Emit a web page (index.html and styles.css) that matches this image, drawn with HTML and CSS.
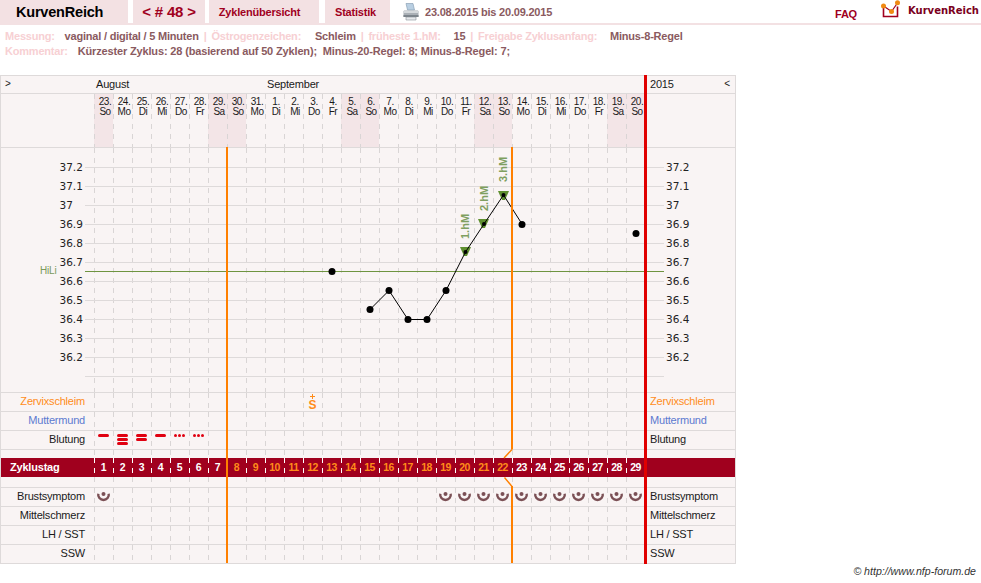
FILE: index.html
```html
<!DOCTYPE html>
<html lang="en">
<head>
    <meta charset="UTF-8">
    <title>KurvenReich</title>
    <link rel="stylesheet" href="styles.css">
</head>
<body>

    <!-- Header -->
    <div class="header">
        <div class="tab tab-logo">KurvenReich</div>
        <div class="tab tab-cycle">&lt; # 48 &gt;</div>
        <div class="tab tab-overview">Zyklenübersicht</div>
        <div class="tab tab-stats">Statistik</div>
        <svg class="printer" width="16" height="18" viewBox="0 0 16 18">
            <path d="M3 0.5h7l1.5 6.5h-7z" fill="#b9cfe2" stroke="#7f97ad" stroke-width="0.6"/>
            <path d="M1 7.5h14l0.5 1v5.5h-15v-5.5z" fill="#aab0b6"/>
            <path d="M1 8h14v2h-14z" fill="#d5d9dc"/>
            <path d="M3 14h10v3h-10z" fill="#e6e9ec" stroke="#8b9299" stroke-width="0.6"/>
            <path d="M0.5 12h15v2h-15z" fill="#7d858c"/>
        </svg>
        <div class="dates">23.08.2015 bis 20.09.2015</div>
        <div class="faq">FAQ</div>
        <svg class="logo-mark" width="20" height="19" viewBox="0 0 20 19">
            <path d="M2.5 7v9.5h14v-10" fill="none" stroke="#a0001e" stroke-width="1.6"/>
            <path d="M2.5 6l8 5.5 6-8.5" fill="none" stroke="#a0001e" stroke-width="1.2"/>
            <circle cx="2.5" cy="6" r="2.5" fill="#f08a12"/>
            <circle cx="10.5" cy="11.5" r="2.5" fill="#f08a12"/>
            <circle cx="16.5" cy="2.8" r="2.5" fill="#f08a12"/>
        </svg>
        <div class="logo-text">KurvenReich</div>
    </div>

    <!-- Cycle info -->
    <div class="info">
        <div>
            <span class="lbl">Messung:</span>
            <span class="val val-mess">vaginal / digital / 5 Minuten</span>
            <span class="lbl sep">|</span>
            <span class="lbl">Östrogenzeichen:</span>
            <span class="val val-oe">Schleim</span>
            <span class="lbl sep">|</span>
            <span class="lbl">früheste 1.hM:</span>
            <span class="val val-hm">15</span>
            <span class="lbl sep">|</span>
            <span class="lbl">Freigabe Zyklusanfang:</span>
            <span class="val val-frei">Minus-8-Regel</span>
        </div>
        <div>
            <span class="lbl">Kommentar:</span>
            <span class="val val-komm">Kürzester Zyklus: 28 (basierend auf 50 Zyklen); &nbsp;Minus-20-Regel: 8; Minus-8-Regel: 7;</span>
        </div>
    </div>

    <!-- Chart table -->
    <div class="chart">
        <div class="row row-months">
            <div class="side toggle">&gt;</div>
            <div class="months">
                <span class="month-aug">August</span>
                <span>September</span>
            </div>
            <div class="side-right year"><span>2015</span><span class="toggle">&lt;</span></div>
        </div>

        <div class="row row-days">
            <div></div>
            <div class="days">
                <div class="day we">23.<br>So</div>
                <div class="day">24.<br>Mo</div>
                <div class="day">25.<br>Di</div>
                <div class="day">26.<br>Mi</div>
                <div class="day">27.<br>Do</div>
                <div class="day">28.<br>Fr</div>
                <div class="day we">29.<br>Sa</div>
                <div class="day we">30.<br>So</div>
                <div class="day">31.<br>Mo</div>
                <div class="day">1.<br>Di</div>
                <div class="day">2.<br>Mi</div>
                <div class="day">3.<br>Do</div>
                <div class="day">4.<br>Fr</div>
                <div class="day we">5.<br>Sa</div>
                <div class="day we">6.<br>So</div>
                <div class="day">7.<br>Mo</div>
                <div class="day">8.<br>Di</div>
                <div class="day">9.<br>Mi</div>
                <div class="day">10.<br>Do</div>
                <div class="day">11.<br>Fr</div>
                <div class="day we">12.<br>Sa</div>
                <div class="day we">13.<br>So</div>
                <div class="day">14.<br>Mo</div>
                <div class="day">15.<br>Di</div>
                <div class="day">16.<br>Mi</div>
                <div class="day">17.<br>Do</div>
                <div class="day">18.<br>Fr</div>
                <div class="day we">19.<br>Sa</div>
                <div class="day we">20.<br>So</div>
            </div>
            <div></div>
        </div>

        <!-- Temperature curve, coordinates are page pixels -->
        <div class="row-plot">
            <svg class="plot" width="734" height="244" viewBox="1 148 734 244">
                <g class="col-lines">
                    <path d="M94 148V392M113 148V392M132 148V392M151 148V392M170 148V392M189 148V392M208 148V392M227 148V392M246 148V392M265 148V392M284 148V392M303 148V392M322 148V392M341 148V392M360 148V392M379 148V392M398 148V392M417 148V392M436 148V392M455 148V392M474 148V392M493 148V392M512 148V392M531 148V392M550 148V392M569 148V392M588 148V392M607 148V392M626 148V392"/>
                </g>
                <path class="temp-lines" d="M85 167.5H664M85 186.5H664M85 205.5H664M85 224.5H664M85 243.5H664M85 262.5H664M85 281.5H664M85 300.5H664M85 319.5H664M85 338.5H664M85 357.5H664M85 376.5H664"/>
                <g class="temps">
                    <text x="59.5" y="171">37.2</text><text x="666" y="171">37.2</text>
                    <text x="59.5" y="190">37.1</text><text x="666" y="190">37.1</text>
                    <text x="59.5" y="209">37</text><text x="666" y="209">37</text>
                    <text x="59.5" y="228">36.9</text><text x="666" y="228">36.9</text>
                    <text x="59.5" y="247">36.8</text><text x="666" y="247">36.8</text>
                    <text x="59.5" y="266">36.7</text><text x="666" y="266">36.7</text>
                    <text x="59.5" y="285">36.6</text><text x="666" y="285">36.6</text>
                    <text x="59.5" y="304">36.5</text><text x="666" y="304">36.5</text>
                    <text x="59.5" y="323">36.4</text><text x="666" y="323">36.4</text>
                    <text x="59.5" y="342">36.3</text><text x="666" y="342">36.3</text>
                    <text x="59.5" y="361">36.2</text><text x="666" y="361">36.2</text>
                </g>
                <text class="hili" x="40" y="274">HiLi</text>
                <path class="hili-line" d="M85 271.5H664"/>
                <polygon class="hm" points="460,247 471,247 467,256 464,256"/>
                <polygon class="hm" points="478,219 489,219 485,228 482,228"/>
                <polygon class="hm" points="498,191 509,191 505,200 502,200"/>
                <text class="hm-text" transform="translate(469 239) rotate(-90)">1.hM</text>
                <text class="hm-text" transform="translate(488 211) rotate(-90)">2.hM</text>
                <text class="hm-text" transform="translate(507 182) rotate(-90)">3.hM</text>
                <polyline class="curve" points="370,309.5 389,290.5 408,319.5 427,319.5 446,290.5 465.5,252 484,224 503.5,195 522,224"/>
                <g class="dots">
                    <circle cx="332" cy="271.5" r="3.5"/>
                    <circle cx="370" cy="309.5" r="3.5"/>
                    <circle cx="389" cy="290.5" r="3.5"/>
                    <circle cx="408" cy="319.5" r="3.5"/>
                    <circle cx="427" cy="319.5" r="3.5"/>
                    <circle cx="446" cy="290.5" r="3.5"/>
                    <circle cx="465.5" cy="252" r="2"/>
                    <circle cx="484" cy="224" r="2"/>
                    <circle cx="503.5" cy="195" r="2"/>
                    <circle cx="522" cy="224.5" r="3.5"/>
                    <circle cx="636" cy="233.5" r="3.5"/>
                </g>
            </svg>
        </div>

        <div class="row">
            <div class="side orange">Zervixschleim</div>
            <div class="cells">
                <div class="mucus at12"><i class="plus"></i><b>S</b></div>
            </div>
            <div class="side-right orange">Zervixschleim</div>
        </div>
        <div class="row">
            <div class="side blue">Muttermund</div>
            <div class="cells"></div>
            <div class="side-right blue">Muttermund</div>
        </div>
        <div class="row">
            <div class="side">Blutung</div>
            <div class="cells">
                <div class="blood"><i class="bar"></i></div>
                <div class="blood"><i class="bar"></i><i class="bar"></i><i class="bar"></i></div>
                <div class="blood"><i class="bar"></i><i class="bar"></i></div>
                <div class="blood"><i class="bar"></i></div>
                <div class="blood spots"><i></i><i></i><i></i></div>
                <div class="blood spots"><i></i><i></i><i></i></div>
            </div>
            <div class="side-right">Blutung</div>
        </div>

        <div class="row row-gap">
            <div></div>
            <div class="cells"></div>
            <div></div>
        </div>

        <div class="row row-band">
            <div class="side band-title">Zyklustag</div>
            <div class="cells band-cells">
                <div class="num">1</div><div class="num">2</div><div class="num">3</div><div class="num">4</div>
                <div class="num">5</div><div class="num">6</div><div class="num">7</div>
                <div class="num fertile">8</div><div class="num fertile">9</div><div class="num fertile">10</div>
                <div class="num fertile">11</div><div class="num fertile">12</div><div class="num fertile">13</div>
                <div class="num fertile">14</div><div class="num fertile">15</div><div class="num fertile">16</div>
                <div class="num fertile">17</div><div class="num fertile">18</div><div class="num fertile">19</div>
                <div class="num fertile">20</div><div class="num fertile">21</div><div class="num fertile">22</div>
                <div class="num">23</div><div class="num">24</div><div class="num">25</div><div class="num">26</div>
                <div class="num">27</div><div class="num">28</div><div class="num">29</div>
            </div>
            <div></div>
        </div>

        <div class="row row-gap row-gap-low">
            <div></div>
            <div class="cells"></div>
            <div></div>
        </div>

        <div class="row">
            <div class="side">Brustsymptom</div>
            <div class="cells">
                <svg class="breast" viewBox="0 0 19 18"><use href="#breast-mark"/></svg>
                <svg class="breast at19" viewBox="0 0 19 18"><use href="#breast-mark"/></svg>
                <svg class="breast" viewBox="0 0 19 18"><use href="#breast-mark"/></svg>
                <svg class="breast" viewBox="0 0 19 18"><use href="#breast-mark"/></svg>
                <svg class="breast" viewBox="0 0 19 18"><use href="#breast-mark"/></svg>
                <svg class="breast" viewBox="0 0 19 18"><use href="#breast-mark"/></svg>
                <svg class="breast" viewBox="0 0 19 18"><use href="#breast-mark"/></svg>
                <svg class="breast" viewBox="0 0 19 18"><use href="#breast-mark"/></svg>
                <svg class="breast" viewBox="0 0 19 18"><use href="#breast-mark"/></svg>
                <svg class="breast" viewBox="0 0 19 18"><use href="#breast-mark"/></svg>
                <svg class="breast" viewBox="0 0 19 18"><use href="#breast-mark"/></svg>
                <svg class="breast" viewBox="0 0 19 18"><use href="#breast-mark"/></svg>
            </div>
            <div class="side-right">Brustsymptom</div>
        </div>
        <div class="row">
            <div class="side">Mittelschmerz</div>
            <div class="cells"></div>
            <div class="side-right">Mittelschmerz</div>
        </div>
        <div class="row">
            <div class="side">LH / SST</div>
            <div class="cells"></div>
            <div class="side-right">LH / SST</div>
        </div>
        <div class="row">
            <div class="side">SSW</div>
            <div class="cells"></div>
            <div class="side-right">SSW</div>
        </div>

        <!-- Cover lines and end of cycle line -->
        <svg class="overlay" width="736" height="489" viewBox="0 75 736 489">
            <path class="cover" d="M227 147V563"/>
            <path class="cover" d="M512 147V449.5"/>
            <path class="cover cover-thin" d="M512 449.5L504 458M504.5 477.5L512 486.5"/>
            <path class="cover" d="M512 486V563"/>
            <rect class="cycle-end" x="644" y="75" width="3" height="489"/>
        </svg>
    </div>

    <div class="footer">© http://www.nfp-forum.de</div>

    <svg class="defs" width="0" height="0">
        <symbol id="breast-mark" viewBox="0 0 19 18">
            <path d="M4.3 5.7A5.3 5.3 0 1 0 14.7 5.7" fill="none" stroke="#7b5055" stroke-width="2.4"/>
            <circle cx="9.5" cy="6" r="2" fill="#7b5055"/>
        </symbol>
    </svg>

</body>
</html>
```

FILE: styles.css
```css
/* General Styles */
body {
    font-family: "Liberation Sans", Arial, sans-serif;
    font-size: 11px;
    letter-spacing: -0.2px;
    margin: 0;
    padding: 0;
    background: #ffffff;
    color: #1a1a1a;
}

/* Header */
.header {
    display: flex;
    align-items: flex-start;
    height: 23px;
    border-bottom: 2px solid #f3e1e3;
}

.tab {
    height: 23px;
    line-height: 24px;
    background: #f3e1e3;
    color: #a0001e;
    font-weight: bold;
    text-align: center;
    box-sizing: border-box;
}

.tab-logo {
    width: 128px;
    padding-left: 16px;
    text-align: left;
    color: #000000;
    font-size: 14.5px;
}

.tab-cycle {
    width: 72px;
    margin-left: 5px;
    font-size: 15px;
}

.tab-overview {
    width: 110px;
    margin-left: 4px;
    padding-right: 9px;
}

.tab-stats {
    width: 65px;
    margin-left: 6px;
    padding-right: 4px;
}

.printer {
    margin: 3px 0 0 13px;
}

.dates {
    margin-left: 6px;
    line-height: 24px;
    font-weight: bold;
    color: #8a5a60;
}

.faq {
    margin-left: auto;
    line-height: 28px;
    font-weight: bold;
    color: #a0001e;
}

.logo-mark {
    margin: 0 0 0 24px;
}

.logo-text {
    margin: 0 2px 0 7px;
    line-height: 22px;
    font-family: "DejaVu Sans", sans-serif;
    font-size: 10px;
    font-weight: bold;
    letter-spacing: 0;
    color: #7a0020;
}

/* Cycle info */
.info {
    padding: 4px 0 16px 5px;
    line-height: 15px;
    font-weight: bold;
}

.lbl {
    color: #f7d0d3;
}

.val {
    color: #8a5a60;
}

.sep {
    margin: 0 2px;
}

.val-mess {
    margin-left: 7px;
}

.val-oe {
    margin-left: 11px;
}

.val-hm {
    margin-left: 10px;
}

.val-frei {
    margin-left: 10px;
}

.val-komm {
    margin-left: 7px;
    letter-spacing: -0.15px;
}

/* Chart table */
.chart {
    position: relative;
    width: 736px;
    box-sizing: border-box;
    border: 1px solid #dedada;
    border-bottom: none;
    background: #f9f4f4;
}

.row {
    display: grid;
    grid-template-columns: 93px 551px 1fr;
    height: 19px;
    box-sizing: border-box;
    border-bottom: 1px solid #dedada;
    line-height: 17px;
}

.side {
    padding-right: 9px;
    text-align: right;
}

.side-right {
    padding-left: 5px;
}

.orange {
    color: #ff8c1a;
}

.blue {
    color: #5c7ad0;
}

.row-months {
    height: 18px;
}

.toggle {
    padding: 0;
    line-height: 15px;
    font-size: 10px;
}

.row-months > .toggle {
    padding-left: 4px;
    text-align: left;
}

.months {
    display: grid;
    grid-template-columns: 171px 1fr;
    padding-left: 2px;
}

.year {
    display: flex;
    justify-content: space-between;
    padding-right: 5px;
}

.row-days {
    height: 54px;
}

.days,
.cells {
    display: grid;
    grid-template-columns: repeat(29, 19px);
    grid-auto-rows: 100%;
}

.day {
    padding: 3px 0 0 3px;
    font-size: 10px;
    letter-spacing: -0.5px;
    line-height: 10px;
    text-align: center;
    background-image: repeating-linear-gradient(to bottom, #d9d5d5 0 5px, transparent 5px 10px);
    background-size: 1px 100%;
    background-repeat: no-repeat;
}

.we {
    background-color: #f3e5e7;
}

/* Dashed day lines: stripes on top of solid lines */
.cells {
    background-image:
        repeating-linear-gradient(to bottom, transparent 0 5px, #f9f4f4 5px 10px),
        linear-gradient(to right, #d9d5d5 1px, transparent 1px);
    background-size: 100% 100%, 19px 100%;
}

.row-plot {
    height: 245px;
    box-sizing: border-box;
    border-bottom: 1px solid #dedada;
}

.plot {
    display: block;
}

.col-lines path {
    stroke: #d9d5d5;
    stroke-dasharray: 5 5;
    fill: none;
    transform: translateX(0.5px);
}

.temp-lines {
    stroke: #dedada;
    fill: none;
}

.temps text {
    font-family: "DejaVu Sans", sans-serif;
    font-size: 10.5px;
    letter-spacing: 0;
    fill: #222222;
}

.hili {
    font-size: 10px;
    fill: #7a9a5a;
}

.hili-line {
    stroke: #6f9440;
    fill: none;
}

.hm {
    fill: #5f8f2f;
}

.hm-text {
    font-size: 11px;
    font-weight: bold;
    letter-spacing: 0;
    fill: #7f9f60;
}

.curve {
    fill: none;
    stroke: #000000;
}

.dots circle {
    fill: #000000;
}

/* Symptom marks */
.mucus {
    display: flex;
    flex-direction: column;
    align-items: center;
    padding-top: 1px;
    color: #ff8c1a;
}

.plus {
    width: 5px;
    height: 5px;
    margin-bottom: 1px;
    background:
        linear-gradient(#ff8c1a, #ff8c1a) center / 100% 1px no-repeat,
        linear-gradient(#ff8c1a, #ff8c1a) center / 1px 100% no-repeat;
}

.mucus b {
    font-size: 12px;
    line-height: 10px;
}

.at12 {
    grid-column: 12;
}

.at19 {
    grid-column: 19;
}

.blood {
    display: flex;
    flex-direction: column;
    align-items: center;
    gap: 1px;
    padding-top: 3px;
}

.bar {
    display: block;
    width: 11px;
    height: 3px;
    border-radius: 2px;
    background: #e00010;
}

.spots {
    flex-direction: row;
    justify-content: center;
    align-items: flex-start;
}

.spots i {
    width: 3px;
    height: 3px;
    border-radius: 50%;
    background: #e00010;
}

.row-gap {
    height: 8px;
    border-bottom: none;
}

.row-gap-low {
    height: 11px;
    border-bottom: 1px solid #dedada;
}

.row-band {
    height: 19px;
    border-bottom: none;
    background: #a0001e;
    color: #ffffff;
    font-weight: bold;
}

.band-title {
    padding-left: 9px;
    padding-right: 0;
    text-align: left;
    line-height: 19px;
}

.band-cells {
    background-image:
        repeating-linear-gradient(to bottom, transparent 0 5px, #a0001e 5px 10px),
        linear-gradient(to right, #ffffff 1px, transparent 1px);
}

.num {
    font-size: 10.5px;
    text-align: center;
    letter-spacing: -0.5px;
    line-height: 19px;
}

.fertile {
    color: #ff8c1a;
}

.breast {
    display: block;
    width: 19px;
    height: 18px;
}

/* Overlay lines */
.overlay {
    position: absolute;
    left: -1px;
    top: -1px;
    pointer-events: none;
}

.cover {
    fill: none;
    stroke: #ff8000;
    stroke-width: 2;
}

.cover-thin {
    stroke-width: 1.4;
}

.cycle-end {
    fill: #e00000;
}

.footer {
    padding: 1px 5px 0 0;
    text-align: right;
    font-size: 10.6px;
    font-style: italic;
    letter-spacing: 0;
    color: #333333;
}

.defs {
    position: absolute;
}
```
